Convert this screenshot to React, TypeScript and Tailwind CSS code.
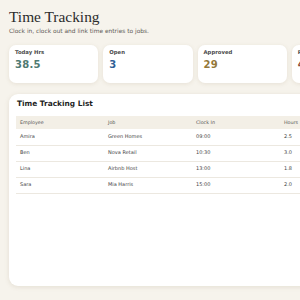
const stats = [
  { label: 'Today Hrs', value: '38.5', color: 'text-[#4f7a72]' },
  { label: 'Open', value: '3', color: 'text-[#2f5f96]' },
  { label: 'Approved', value: '29', color: 'text-[#94783a]' },
  { label: 'Pending', value: '4', color: 'text-[#8a4a3a]' },
]

const rows = [
  { employee: 'Amira', job: 'Green Homes', clockIn: '09:00', hours: '2.5' },
  { employee: 'Ben', job: 'Nova Retail', clockIn: '10:30', hours: '3.0' },
  { employee: 'Lina', job: 'Airbnb Host', clockIn: '13:00', hours: '1.8' },
  { employee: 'Sara', job: 'Mia Harris', clockIn: '15:00', hours: '2.0' },
]

export default function App() {
  return (
    <div className="w-[300px] h-[300px] overflow-hidden bg-[#f6f3ec] font-['DejaVu_Sans',sans-serif]">
      <div className="w-[390px] px-[9px] pt-[8px]">
        <h1 className="font-['Liberation_Serif',serif] text-[15.4px] leading-[18px] text-[#2b2b2b]">Time Tracking</h1>
        <p className="text-[5.9px] leading-[8px] mt-[1px] text-[#5d5a55]">Clock in, clock out and link time entries to jobs.</p>

        <div className="grid grid-cols-4 gap-[5px] mt-[10px]">
          {stats.map(s => (
            <div key={s.label} className="h-[38px] rounded-[7px] bg-white shadow-[0_1px_4px_rgba(120,100,60,0.12)] px-[6px] pt-[4px]">
              <div className="text-[5.3px] leading-[7px] font-semibold text-[#4a4a4a]">{s.label}</div>
              <div className={`text-[10px] leading-[12px] font-bold mt-[3px] tracking-[0.3px] ${s.color}`}>{s.value}</div>
            </div>
          ))}
        </div>

        <div className="mt-[11px] h-[192px] rounded-[9px] bg-white shadow-[0_1px_5px_rgba(120,100,60,0.14)] px-[7px] pt-[5px]">
          <h2 className="text-[7.4px] leading-[10px] font-bold text-[#1f1f1f] pl-[1px]">Time Tracking List</h2>
          <table className="w-full mt-[7px] border-collapse text-left">
            <thead>
              <tr className="bg-[#f3efe6]">
                <th className="w-[88px] h-[13px] pl-[4px] text-[4.8px] font-normal text-[#555]">Employee</th>
                <th className="w-[88px] pl-[4px] text-[4.8px] font-normal text-[#555]">Job</th>
                <th className="w-[88px] pl-[4px] text-[4.8px] font-normal text-[#555]">Clock In</th>
                <th className="pl-[4px] text-[4.8px] font-normal text-[#555]">Hours</th>
              </tr>
            </thead>
            <tbody>
              {rows.map(r => (
                <tr key={r.employee} className="border-b border-[#ece8e0]">
                  <td className="h-[16px] pl-[4px] text-[5px] text-[#444]">{r.employee}</td>
                  <td className="pl-[4px] text-[5px] text-[#444]">{r.job}</td>
                  <td className="pl-[4px] text-[5px] text-[#444]">{r.clockIn}</td>
                  <td className="pl-[4px] text-[5px] text-[#444]">{r.hours}</td>
                </tr>
              ))}
            </tbody>
          </table>
        </div>
      </div>
    </div>
  )
}
